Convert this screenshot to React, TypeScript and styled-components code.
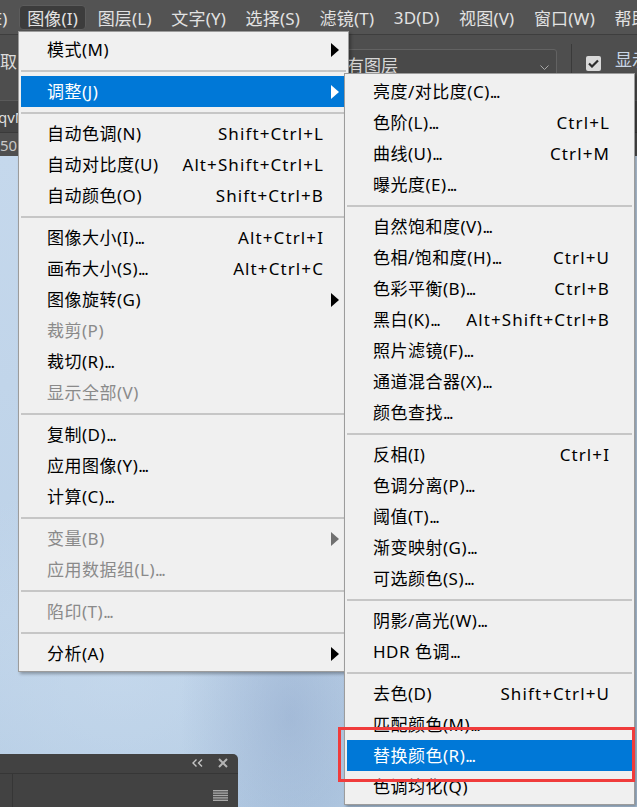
import React from "react";
import styled, { createGlobalStyle } from "styled-components";

const FONT = `"Noto Sans", "Noto Sans CJK SC", sans-serif`;

interface MenuEntry {
    label: string;
    shortcut?: string;
    submenu?: boolean;
    disabled?: boolean;
    active?: boolean;
}

const SEP = "-" as const;
type Entry = MenuEntry | typeof SEP;

const menuTitles = ["图像(I)", "图层(L)", "文字(Y)", "选择(S)", "滤镜(T)", "3D(D)", "视图(V)", "窗口(W)", "帮助(H)"];

const imageMenu: Entry[] = [
    { label: "模式(M)", submenu: true },
    SEP,
    { label: "调整(J)", submenu: true, active: true },
    SEP,
    { label: "自动色调(N)", shortcut: "Shift+Ctrl+L" },
    { label: "自动对比度(U)", shortcut: "Alt+Shift+Ctrl+L" },
    { label: "自动颜色(O)", shortcut: "Shift+Ctrl+B" },
    SEP,
    { label: "图像大小(I)...", shortcut: "Alt+Ctrl+I" },
    { label: "画布大小(S)...", shortcut: "Alt+Ctrl+C" },
    { label: "图像旋转(G)", submenu: true },
    { label: "裁剪(P)", disabled: true },
    { label: "裁切(R)..." },
    { label: "显示全部(V)", disabled: true },
    SEP,
    { label: "复制(D)..." },
    { label: "应用图像(Y)..." },
    { label: "计算(C)..." },
    SEP,
    { label: "变量(B)", submenu: true, disabled: true },
    { label: "应用数据组(L)...", disabled: true },
    SEP,
    { label: "陷印(T)...", disabled: true },
    SEP,
    { label: "分析(A)", submenu: true },
];

const adjustMenu: Entry[] = [
    { label: "亮度/对比度(C)..." },
    { label: "色阶(L)...", shortcut: "Ctrl+L" },
    { label: "曲线(U)...", shortcut: "Ctrl+M" },
    { label: "曝光度(E)..." },
    SEP,
    { label: "自然饱和度(V)..." },
    { label: "色相/饱和度(H)...", shortcut: "Ctrl+U" },
    { label: "色彩平衡(B)...", shortcut: "Ctrl+B" },
    { label: "黑白(K)...", shortcut: "Alt+Shift+Ctrl+B" },
    { label: "照片滤镜(F)..." },
    { label: "通道混合器(X)..." },
    { label: "颜色查找..." },
    SEP,
    { label: "反相(I)", shortcut: "Ctrl+I" },
    { label: "色调分离(P)..." },
    { label: "阈值(T)..." },
    { label: "渐变映射(G)..." },
    { label: "可选颜色(S)..." },
    SEP,
    { label: "阴影/高光(W)..." },
    { label: "HDR 色调..." },
    SEP,
    { label: "去色(D)", shortcut: "Shift+Ctrl+U" },
    { label: "匹配颜色(M)..." },
    { label: "替换颜色(R)...", active: true },
    { label: "色调均化(Q)" },
];

// "..." is drawn tight, the way the Windows menu font sets it
const renderLabel = (label: string) => {
    if (!label.endsWith("...")) return label;
    return (
        <>
            {label.slice(0, -3)}
            <Dots>...</Dots>
        </>
    );
};

const Arrow: React.FC<{ color: string }> = ({ color }) => (
    <svg width="8" height="14" viewBox="0 0 8 14">
        <polygon points="0,0 8,7 0,14" fill={color} />
    </svg>
);

const Menu: React.FC<{ entries: Entry[]; left: number; top: number; width: number }> = ({ entries, left, top, width }) => (
    <Popup $left={left} $top={top} $width={width}>
        {entries.map((entry, i) => {
            if (entry === SEP) return <Separator key={i} />;
            const arrowColor = entry.active ? "#ffffff" : entry.disabled ? "#707070" : "#000000";
            return (
                <Row key={i} $active={entry.active} $disabled={entry.disabled}>
                    <Label>{renderLabel(entry.label)}</Label>
                    <Shortcut>{entry.shortcut}</Shortcut>
                    <ArrowCell>{entry.submenu && <Arrow color={arrowColor} />}</ArrowCell>
                </Row>
            );
        })}
    </Popup>
);

const App: React.FC = () => {
    return (
        <>
            <GlobalStyle />
            <Screen>
                <MenuBar>
                    <CutTitle>编辑(E)</CutTitle>
                    {menuTitles.map((t, i) => (
                        <MenuTitle key={t} $active={i === 0}>{t}</MenuTitle>
                    ))}
                </MenuBar>

                <OptionsBar>
                    <OptLabel>取</OptLabel>
                    <Dropdown>
                        <span>所有图层</span>
                        <svg width="9" height="5" viewBox="0 0 9 5">
                            <polyline points="0.5,0.5 4.5,4.5 8.5,0.5" fill="none" stroke="#a8a8a8" strokeWidth="1" />
                        </svg>
                    </Dropdown>
                    <VDivider />
                    <CheckBox>
                        <svg width="11" height="9" viewBox="0 0 11 9">
                            <polyline points="1,4.5 4,7.5 10,1.5" fill="none" stroke="#2b2b2b" strokeWidth="2.2" />
                        </svg>
                    </CheckBox>
                    <CheckLabel>显示变换控件</CheckLabel>
                </OptionsBar>

                <DocTabs>
                    <TabText>qvMx.psd @ 50%</TabText>
                </DocTabs>
                <Ruler>
                    <RulerText>50</RulerText>
                </Ruler>

                <Canvas>
                    <Panel>
                        <PanelHeader>
                            <svg width="11" height="8" viewBox="0 0 11 8">
                                <polyline points="4.5,0.5 1,4 4.5,7.5" fill="none" stroke="#c4c4c4" strokeWidth="1.4" />
                                <polyline points="10,0.5 6.5,4 10,7.5" fill="none" stroke="#c4c4c4" strokeWidth="1.4" />
                            </svg>
                            <svg width="10" height="10" viewBox="0 0 10 10">
                                <path d="M1 1 L9 9 M9 1 L1 9" stroke="#b4b4b4" strokeWidth="2" />
                            </svg>
                        </PanelHeader>
                        <PanelBody>
                            <PanelSide />
                            <svg width="15" height="11" viewBox="0 0 15 11">
                                {[0, 2.4, 4.8, 7.2, 9.6].map((y) => (
                                    <rect key={y} x="0" y={y} width="15" height="1.4" fill="#a8a8a8" />
                                ))}
                            </svg>
                        </PanelBody>
                    </Panel>
                </Canvas>

                <Menu entries={imageMenu} left={18} top={31} width={331} />
                <Menu entries={adjustMenu} left={344} top={73} width={291} />
                <Mark />
            </Screen>
        </>
    );
};

const GlobalStyle = createGlobalStyle`
  html, body {
    margin: 0;
    padding: 0;
    background: #535353;
  }
  body {
    font-family: ${FONT};
    overflow: hidden;
  }
  * {
    box-sizing: border-box;
  }
`;

const Screen = styled.div`
  position: relative;
  width: 637px;
  height: 807px;
  overflow: hidden;
  display: flex;
  flex-direction: column;
  font-family: ${FONT};
`;

const MenuBar = styled.div`
  height: 35px;
  flex-shrink: 0;
  display: flex;
  align-items: center;
  background: #535353;
  border-bottom: 1px solid #3e3e3e;
  white-space: nowrap;
  overflow: hidden;
`;

const MenuTitle = styled.div<{ $active?: boolean }>`
  flex-shrink: 0;
  height: 25px;
  display: flex;
  align-items: center;
  padding: 0 7px;
  margin-right: 3.5px;
  font-size: 17px;
  letter-spacing: 0.2px;
  color: #e2e2e2;
  border-radius: 4px;
  background: ${(p) => (p.$active ? "#3c3c3c" : "transparent")};
  border: 1px solid ${(p) => (p.$active ? "#5c5c5c" : "transparent")};
`;

const CutTitle = styled(MenuTitle)`
  margin-left: -55px;
`;

const OptionsBar = styled.div`
  height: 65px;
  flex-shrink: 0;
  display: flex;
  align-items: flex-start;
  background: #4e4e4e;
  white-space: nowrap;
  overflow: hidden;
`;

const OptLabel = styled.div`
  flex-shrink: 0;
  margin-top: 17px;
  font-size: 17px;
  line-height: 20px;
  color: #dcdcdc;
`;

const Dropdown = styled.div`
  flex-shrink: 0;
  width: 236px;
  height: 30px;
  margin: 14px 0 0 304px;
  padding: 0 7px 0 8px;
  display: flex;
  align-items: center;
  justify-content: space-between;
  background: #494949;
  border: 1px solid #626262;
  border-radius: 3px;
  font-size: 17px;
  color: #d8d8d8;

  svg {
    margin-top: 6px;
  }
`;

const VDivider = styled.div`
  flex-shrink: 0;
  width: 1px;
  height: 56px;
  margin: 9px 14px 0;
  background: #3a3a3a;
`;

const CheckBox = styled.div`
  flex-shrink: 0;
  width: 15px;
  height: 15px;
  margin-top: 21px;
  display: flex;
  align-items: center;
  justify-content: center;
  background: #d9d9d9;
  border-radius: 2px;
`;

const CheckLabel = styled.div`
  flex-shrink: 0;
  margin: 15px 0 0 14px;
  font-size: 17px;
  line-height: 20px;
  color: #c9d6e6;
`;

const DocTabs = styled.div`
  height: 32px;
  flex-shrink: 0;
  display: flex;
  align-items: center;
  background: #454545;
  border-top: 1px solid #5a5a5a;
  overflow: hidden;
  white-space: nowrap;
`;

const TabText = styled.div`
  margin-left: -2px;
  font-size: 15px;
  color: #dedede;
`;

const Ruler = styled.div`
  height: 24px;
  flex-shrink: 0;
  display: flex;
  align-items: flex-end;
  background: #4f4f4f;
  border-top: 1px solid #3a3a3a;
`;

const RulerText = styled.div`
  padding-bottom: 3px;
  font-size: 15px;
  line-height: 16px;
  color: #c8c8c8;
`;

const Canvas = styled.div`
  flex: 1;
  display: flex;
  flex-direction: column;
  justify-content: flex-end;
  background:
    radial-gradient(ellipse 110px 190px at 290px 560px, rgba(140, 164, 200, 0.5), rgba(140, 164, 200, 0) 100%),
    radial-gradient(ellipse 260px 200px at 120px 520px, rgba(205, 222, 240, 0.5), rgba(205, 222, 240, 0) 100%),
    linear-gradient(180deg, #c5d8ec 0%, #bdd2e8 70%, #b3cbe3 100%);
`;

const Panel = styled.div`
  width: 238px;
  height: 53px;
  display: flex;
  flex-direction: column;
  background: #424242;
  border-top-right-radius: 5px;
`;

const PanelHeader = styled.div`
  height: 20px;
  flex-shrink: 0;
  display: flex;
  align-items: center;
  justify-content: flex-end;
  gap: 15px;
  padding: 0 10px 1px 0;
  border-bottom: 1px solid #363636;
`;

const PanelBody = styled.div`
  flex: 1;
  display: flex;
  align-items: flex-start;
  justify-content: space-between;
  padding-right: 10px;

  svg {
    margin-top: 16px;
  }
`;

const PanelSide = styled.div`
  width: 13px;
  align-self: stretch;
  border-right: 1px solid #363636;
`;

const Popup = styled.div<{ $left: number; $top: number; $width: number }>`
  position: absolute;
  left: ${(p) => p.$left}px;
  top: ${(p) => p.$top}px;
  width: ${(p) => p.$width}px;
  padding: 2px;
  background: #f0f0f0;
  border: 1px solid #9c9c9c;
  box-shadow: 2px 2px 3px rgba(0, 0, 0, 0.3);
`;

const Row = styled.div<{ $active?: boolean; $disabled?: boolean }>`
  display: grid;
  grid-template-columns: 1fr auto 23px;
  align-items: center;
  height: 31px;
  padding-left: 26px;
  font-size: 17px;
  line-height: 20px;
  white-space: nowrap;
  color: ${(p) => (p.$active ? "#ffffff" : p.$disabled ? "#8a8a8a" : "#000000")};
  background: ${(p) => (p.$active ? "#0078d7" : "transparent")};
`;

const Label = styled.span`
  letter-spacing: 0.5px;
`;

const Dots = styled.span`
  letter-spacing: -1.5px;
`;

const Shortcut = styled.span`
  text-align: right;
  letter-spacing: 1.1px;
  margin-right: -1px;
`;

const ArrowCell = styled.span`
  display: flex;
  align-items: center;
  padding-left: 8px;
`;

const Separator = styled.div`
  height: 2px;
  margin: 5px 0 4px;
  background: #c6c6c6;
`;

const Mark = styled.div`
  position: absolute;
  left: 338px;
  top: 727px;
  width: 297px;
  height: 55px;
  border: 3px solid #f03c3c;
`;

export default App;
